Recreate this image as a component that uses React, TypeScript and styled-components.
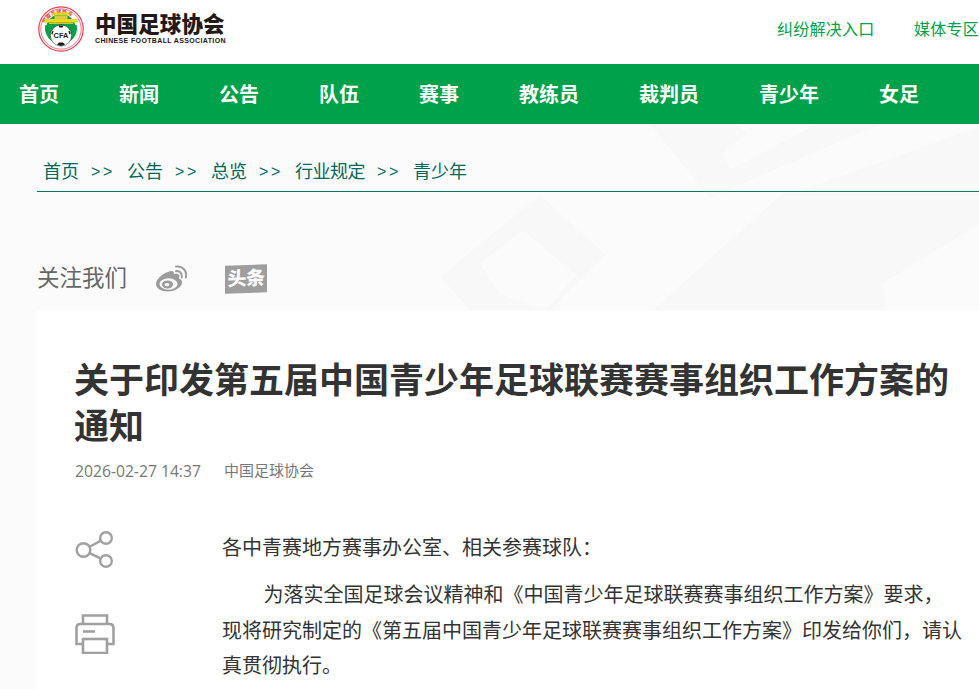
import React, { FC } from 'react'
import styled, { createGlobalStyle } from 'styled-components'

const FONT = `"Liberation Sans", "Noto Sans CJK SC", sans-serif`

const GlobalStyle = createGlobalStyle`
  html, body {
    margin: 0;
    padding: 0;
    height: 689px;
    overflow: hidden;
    background: #ffffff;
  }
  body {
    font-family: ${FONT};
  }
`

const Page = styled.div`
  width: 979px;
  height: 689px;
  overflow: hidden;
`

const Header = styled.header`
  height: 64px;
  display: flex;
  align-items: center;
  justify-content: space-between;
  padding-left: 38px;
  white-space: nowrap;
`

const Logo = styled.div`
  display: flex;
  align-items: center;
  gap: 11px;
  margin-top: -6px;
`

const LogoText = styled.div`
  display: flex;
  flex-direction: column;
  color: #231815;
`

const LogoName = styled.span`
  font-size: 21.5px;
  line-height: 24px;
  font-weight: 900;
  letter-spacing: 0.1px;
`

const LogoEnglish = styled.span`
  font-family: "Liberation Sans", sans-serif;
  font-size: 7px;
  line-height: 8px;
  font-weight: 700;
  letter-spacing: 0.36px;
`

const TopLinks = styled.nav`
  display: flex;
  gap: 39.5px;
  margin-top: -4px;
`

const TopLink = styled.a`
  font-size: 16px;
  line-height: 24px;
  letter-spacing: 0.25px;
  color: #00a14b;
  flex: none;
`

const MainNav = styled.nav`
  height: 60px;
  box-sizing: border-box;
  padding: 2px 0 0 19px;
  background: #00a14b;
  display: flex;
  align-items: center;
  gap: 60px;
  white-space: nowrap;
`

const MainNavItem = styled.a`
  font-size: 20px;
  line-height: 30px;
  font-weight: 700;
  color: #ffffff;
  flex: none;
`

const Backdrop = styled.main`
  position: relative;
  height: 565px;
  background: #fbfbfb;
  overflow: hidden;
`

const BackdropArt = styled.svg`
  position: absolute;
  left: 0;
  top: 0;
`

const Content = styled.div`
  position: relative;
  padding-left: 37px;
`

const Breadcrumb = styled.div`
  height: 68px;
  box-sizing: border-box;
  border-bottom: 1px solid #00795f;
  display: flex;
  align-items: center;
  padding: 28px 0 0 6px;
  font-size: 18px;
  color: #00695c;
  white-space: nowrap;
`

const Crumb = styled.span`
  line-height: 26px;

  /* 行业规定 sits a little tighter in the original */
  &:nth-last-child(3) {
    letter-spacing: -0.5px;
  }
`

const CrumbSeparator = styled.span`
  width: 48px;
  text-align: center;
  font-size: 16px;
  letter-spacing: 2.6px;
  line-height: 26px;
`

const Follow = styled.div`
  height: 119px;
  box-sizing: border-box;
  display: flex;
  align-items: center;
  padding-top: 54px;
`

const FollowLabel = styled.span`
  font-size: 22.5px;
  line-height: 30px;
  color: #666666;
  width: 118px;
`

const FollowIcons = styled.div`
  display: flex;
  align-items: center;
  gap: 38px;
`

const Article = styled.article`
  background: #ffffff;
  height: 378px;
  padding: 47px 0 0 37px;
`

const Title = styled.h1`
  margin: 0;
  width: 880px;
  font-size: 35px;
  line-height: 46px;
  font-weight: 700;
  color: #333333;
`

const Meta = styled.div`
  display: flex;
  gap: 23px;
  margin: 10px 0 0 1px;
  font-size: 15px;
  line-height: 22px;
  color: #777777;
`

const MetaDate = styled.span`
  font-family: "Open Sans", ${FONT};
  font-size: 15.7px;
`

const ArticleBody = styled.div`
  display: flex;
  margin-top: 47px;
`

const Tools = styled.div`
  width: 148px;
  flex: none;
  display: flex;
  flex-direction: column;
  gap: 44px;
  padding: 1px 0 0 1px;
  box-sizing: border-box;
`

const Prose = styled.div`
  width: 741px;
  flex: none;
  padding-top: 2px;
  color: #333333;
  font-size: 20px;
  line-height: 35.5px;
`

const Paragraph = styled.p<{ $indent?: boolean }>`
  margin: 0 0 11.5px;
  text-indent: ${(p) => (p.$indent ? '41.5px' : '0')};
`

const ToutiaoBadge = styled.span`
  width: 42px;
  height: 28px;
  background: #9e9e9e;
  color: #fbfbfb;
  font-size: 19px;
  font-weight: 900;
  line-height: 28px;
  letter-spacing: -0.4px;
  text-align: center;
  transform: skewY(-2deg);
`

const CfaLogo: FC = () => (
  <svg width="46" height="46" viewBox="0 0 46 46">
    <circle cx="23" cy="23" r="22.2" fill="#fff" stroke="#e5404e" strokeWidth="1.2" />
    <circle cx="23" cy="23" r="20.2" fill="#fff" stroke="#e5404e" strokeWidth="0.7" />
    <path id="cfa-arc" d="M5.6 22 A17.6 17.6 0 0 1 40.4 22" fill="none" />
    <text fontSize="4.8" fontWeight="700" fill="#d9333f" letterSpacing="0.5">
      <textPath href="#cfa-arc" startOffset="9%">中国足球协会</textPath>
    </text>
    <circle cx="23" cy="23" r="15" fill="#0aa04a" />
    <path d="M7.3 19 A16 16 0 1 0 38.7 19" fill="#0aa04a" />
    <path d="M15 6.4 H31 L32 9.6 H14 Z" fill="#e7d21c" />
    <rect x="16.5" y="9.6" width="13" height="3.4" fill="#dcc93f" />
    <path d="M7 13 H39 L40.4 16.6 H5.6 Z" fill="#ecd81f" />
    <rect x="11" y="16.6" width="24" height="1.4" fill="#d8c42a" />
    <circle cx="23" cy="29.5" r="10.6" fill="#ffffff" stroke="#1a1a1a" strokeWidth="0.5" />
    <path d="M20.5 19.6 H25.5 L24.6 21.6 H21.4 Z M13.4 27 L14.8 24.4 L15.6 25.6 L14.2 29 Z M32.6 27 L31.2 24.4 L30.4 25.6 L31.8 29 Z M19 38.4 L21 36.6 H25 L27 38.4 L23 40 Z" fill="#1a1a1a" />
    <text x="23" y="32.2" textAnchor="middle" fontSize="7.4" fontWeight="700" fill="#222" fontFamily="Liberation Sans">CFA</text>
  </svg>
)

const WeiboIcon: FC = () => (
  <svg width="32" height="28" viewBox="0 0 32 28">
    <path d="M13 7 C17 5 19 6 19 9 C23 8 25.5 10 24 13.5 C26 14.3 27 15.6 27 17.3 C27 22 20.5 26.5 13 26.5 C6 26.5 1 23.5 1 19 C1 14.8 7 8.6 13 7 Z" fill="#9c9c9c" />
    <ellipse cx="13.5" cy="19" rx="9" ry="5.8" fill="#fbfbfb" />
    <ellipse cx="12.5" cy="19.4" rx="5.6" ry="4" fill="#9c9c9c" />
    <ellipse cx="12" cy="19.6" rx="2.4" ry="1.7" fill="#fbfbfb" />
    <path d="M21 6.2 C24.5 5.6 27.6 8.4 26.8 12.4" fill="none" stroke="#9c9c9c" strokeWidth="2" strokeLinecap="round" />
    <path d="M21 1.6 C27 0.4 32.6 5.6 30.8 12.6" fill="none" stroke="#9c9c9c" strokeWidth="2" strokeLinecap="round" />
  </svg>
)

const ShareIcon: FC = () => (
  <svg width="40" height="40" viewBox="0 0 40 40" fill="none" stroke="#a0a0a0" strokeWidth="2.4">
    <circle cx="8.5" cy="20" r="6.8" />
    <circle cx="31" cy="8" r="5.8" />
    <circle cx="31" cy="31" r="5.8" />
    <path d="M14.5 16.8 L26 10.6 M14.5 23.2 L26 28.6" />
  </svg>
)

const PrintIcon: FC = () => (
  <svg width="40" height="40" viewBox="0 0 40 40" fill="none" stroke="#a0a0a0" strokeWidth="2.6">
    <path d="M8 10 V1.5 H32 V10" />
    <path d="M8 30 H1.5 V14 Q1.5 10 5.5 10 H34.5 Q38.5 10 38.5 14 V30 H32" />
    <rect x="8" y="25" width="24" height="14" />
    <path d="M8 17.5 H20" />
  </svg>
)

const navItems = ['首页', '新闻', '公告', '队伍', '赛事', '教练员', '裁判员', '青少年', '女足']
const crumbs = ['首页', '公告', '总览', '行业规定', '青少年']

export default function App() {
  return (
    <Page>
      <GlobalStyle />
      <Header>
        <Logo>
          <CfaLogo />
          <LogoText>
            <LogoName>中国足球协会</LogoName>
            <LogoEnglish>CHINESE FOOTBALL ASSOCIATION</LogoEnglish>
          </LogoText>
        </Logo>
        <TopLinks>
          <TopLink>纠纷解决入口</TopLink>
          <TopLink>媒体专区</TopLink>
        </TopLinks>
      </Header>
      <MainNav>
        {navItems.map((item) => (
          <MainNavItem key={item}>{item}</MainNavItem>
        ))}
      </MainNav>
      <Backdrop>
        <BackdropArt width="979" height="565" viewBox="0 0 979 565">
          <path d="M650 0 L710 74 L880 0 L817 0 L730 46 L723 29 L747 9 L735 0 Z" fill="#f8f8f8" />
          <path d="M800 67 L979 3 L979 67 Z" fill="#f8f8f8" />
          <path d="M653 186 L783 69 L979 69 L979 100 L883 159 L886 186 Z" fill="#f8f8f8" />
          <path
            d="M540 71 L606 131 L550 186 L470 186 L440 153 Z M523 106 L480 140 L500 170 L545 186 L576 151 Z"
            fill="#f8f8f8"
            fillRule="evenodd"
          />
        </BackdropArt>
        <Content>
          <Breadcrumb>
            {crumbs.map((crumb, index) => (
              <React.Fragment key={crumb}>
                {index > 0 && <CrumbSeparator>&gt;&gt;</CrumbSeparator>}
                <Crumb>{crumb}</Crumb>
              </React.Fragment>
            ))}
          </Breadcrumb>
          <Follow>
            <FollowLabel>关注我们</FollowLabel>
            <FollowIcons>
              <WeiboIcon />
              <ToutiaoBadge>头条</ToutiaoBadge>
            </FollowIcons>
          </Follow>
          <Article>
            <Title>关于印发第五届中国青少年足球联赛赛事组织工作方案的通知</Title>
            <Meta>
              <MetaDate>2026-02-27 14:37</MetaDate>
              <span>中国足球协会</span>
            </Meta>
            <ArticleBody>
              <Tools>
                <ShareIcon />
                <PrintIcon />
              </Tools>
              <Prose>
                <Paragraph>各中青赛地方赛事办公室、相关参赛球队：</Paragraph>
                <Paragraph $indent>
                  为落实全国足球会议精神和《中国青少年足球联赛赛事组织工作方案》要求，现将研究制定的《第五届中国青少年足球联赛赛事组织工作方案》印发给你们，请认真贯彻执行。
                </Paragraph>
              </Prose>
            </ArticleBody>
          </Article>
        </Content>
      </Backdrop>
    </Page>
  )
}
